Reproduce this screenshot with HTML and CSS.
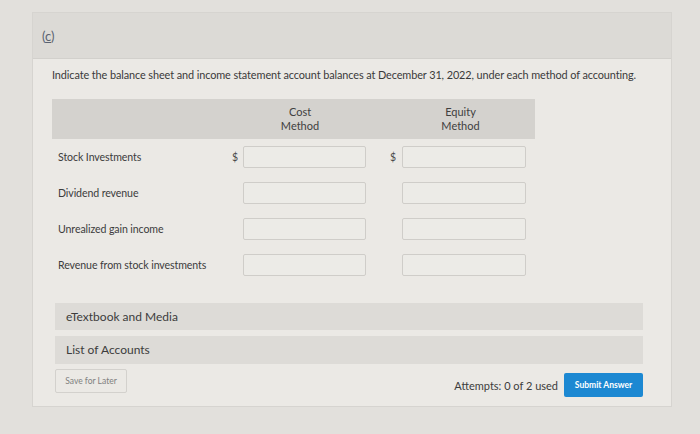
FILE: index.html
```html
<!DOCTYPE html>
<html lang="en">

<head>
  <meta charset="UTF-8">
  <meta name="viewport" content="width=device-width, initial-scale=1.0">
  <title>Question (c)</title>
  <link rel="stylesheet" href="styles.css">
</head>

<body>
  <div class="card">
    <div class="card-head">
      <a class="part-link">(<u>c</u>)</a>
    </div>

    <div class="card-body">
      <p class="prompt">Indicate the balance sheet and income statement account balances at December 31, 2022, under each method of accounting.</p>

      <div class="answer-table">
        <div class="table-head">
          <span class="head-blank"></span>
          <span class="head-cost">Cost<br>Method</span>
          <span class="head-equity">Equity<br>Method</span>
        </div>

        <div class="table-row">
          <span class="row-label">Stock Investments</span>
          <span class="dollar">$</span>
          <input type="text" class="amount">
          <span></span>
          <span class="dollar">$</span>
          <input type="text" class="amount">
        </div>

        <div class="table-row">
          <span class="row-label">Dividend revenue</span>
          <span class="dollar"></span>
          <input type="text" class="amount">
          <span></span>
          <span class="dollar"></span>
          <input type="text" class="amount">
        </div>

        <div class="table-row">
          <span class="row-label">Unrealized gain income</span>
          <span class="dollar"></span>
          <input type="text" class="amount">
          <span></span>
          <span class="dollar"></span>
          <input type="text" class="amount">
        </div>

        <div class="table-row">
          <span class="row-label">Revenue from stock investments</span>
          <span class="dollar"></span>
          <input type="text" class="amount">
          <span></span>
          <span class="dollar"></span>
          <input type="text" class="amount">
        </div>
      </div>

      <div class="band band-first">eTextbook and Media</div>
      <div class="band">List of Accounts</div>

      <div class="footer">
        <button class="save-btn">Save for Later</button>
        <div class="submit-area">
          <span class="attempts">Attempts: 0 of 2 used</span>
          <button class="submit-btn">Submit Answer</button>
        </div>
      </div>
    </div>
  </div>
</body>

</html>
```

FILE: styles.css
```css
/* Page */
body {
  margin: 0;
  padding: 12px 0 0 32px;
  background-color: #e2e0dc;
  font-family: Lato, "Open Sans", Arial, sans-serif;
  color: #3c3c3c;
}

/* Question card */
.card {
  width: 638px;
  border: 1px solid #d6d4d0;
  background-color: #ebe9e5;
}

.card-head {
  height: 45px;
  padding-left: 9px;
  background-color: #dcdad6;
  border-bottom: 1px solid #d2d0cc;
  display: flex;
  align-items: center;
}

.part-link {
  font-size: 13px;
  color: #5a6270;
  margin-top: 1px;
}

.card-body {
  padding: 0 28px 9px 19px;
}

.prompt {
  margin: 0;
  padding: 9px 0 0;
  height: 31px;
  font-size: 10.9px;
  letter-spacing: -0.1px;
  color: #3a3a3a;
  line-height: 14px;
  white-space: nowrap;
}

/* Answer grid */
.answer-table {
  width: 483px;
}

.table-head,
.table-row {
  display: grid;
  grid-template-columns: 176px 15px 123px 20px 16px 124px 9px;
  align-items: center;
}

.table-head {
  height: 40px;
  background-color: #d4d2ce;
  font-size: 11px;
  line-height: 14px;
  color: #404040;
  text-align: center;
}

.head-cost {
  grid-column: 2 / 4;
  padding-left: 6px;
}

.head-equity {
  grid-column: 5 / 8;
}

.table-row {
  height: 36px;
}

.row-label {
  padding-left: 6px;
  font-size: 10.6px;
  letter-spacing: -0.1px;
  color: #3c3c3c;
}

.dollar {
  font-size: 10.5px;
  color: #4a4a4a;
  padding-left: 4px;
}

.amount {
  box-sizing: border-box;
  width: 100%;
  height: 22px;
  margin: 0;
  border: 1px solid #cfcdc9;
  border-radius: 2px;
  background-color: #ecebe7;
}

/* Resource bands */
.band {
  margin: 6px 0 0 3px;
  height: 28px;
  padding-left: 11px;
  background-color: #dddbd7;
  font-size: 12px;
  line-height: 28px;
  color: #3c3c3c;
}

.band-first {
  margin-top: 20px;
  height: 27px;
  line-height: 27px;
}

/* Footer */
.footer {
  display: flex;
  justify-content: space-between;
  margin: 5px 0 0 3px;
}

.save-btn {
  width: 72px;
  height: 24px;
  padding: 0;
  border: 1px solid #d3d1cd;
  border-radius: 2px;
  background-color: #ebe9e5;
  font-family: Lato, Arial, sans-serif;
  font-size: 8.5px;
  color: #808080;
}

.submit-area {
  display: flex;
  align-items: center;
  margin-top: 4px;
}

.attempts {
  font-size: 11px;
  color: #3c3c3c;
  margin-right: 6px;
}

.submit-btn {
  width: 79px;
  height: 24px;
  padding: 0;
  border: none;
  border-radius: 2px;
  background-color: #1c88d2;
  font-family: Lato, Arial, sans-serif;
  font-size: 8.5px;
  font-weight: bold;
  color: #fff;
}
```
